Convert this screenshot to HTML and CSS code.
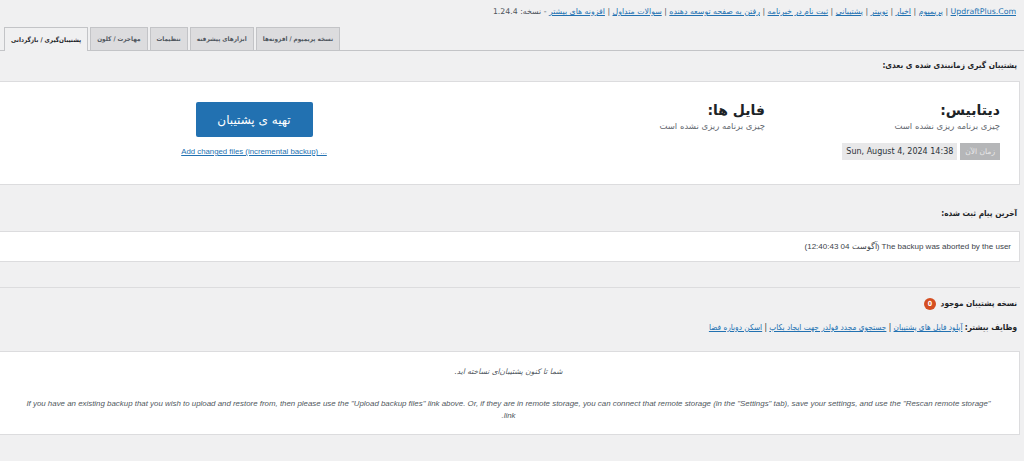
FILE: index.html
```html
<!DOCTYPE html>
<html lang="fa" dir="rtl">
<head>
<meta charset="utf-8">
<title>UpdraftPlus</title>
<link rel="stylesheet" href="styles.css">
</head>
<body>
<div class="topbar">
  <a href="#" class="en">UpdraftPlus.Com</a> | <a href="#">پریمیوم</a> | <a href="#">اخبار</a> | <a href="#">توییتر</a> | <a href="#">پشتیبانی</a> | <a href="#">ثبت نام در خبرنامه</a> | <a href="#">رفتن به صفحه توسعه دهنده</a> | <a href="#">سوالات متداول</a> | <a href="#">افزونه های بیشتر</a> - نسخه: 1.24.4
</div>
<nav class="tabs">
  <span class="tab active">پشتیبان‌گیری / بازگردانی</span>
  <span class="tab">مهاجرت / کلون</span>
  <span class="tab">تنظیمات</span>
  <span class="tab">ابزارهای پیشرفته</span>
  <span class="tab">نسخه پریمیوم / افزونه‌ها</span>
</nav>
<main class="wrap">
  <h2 class="heading first">پشتیبان گیری زمانبندی شده ی بعدی:</h2>
  <section class="box schedule">
    <div class="col col-db">
      <h3 class="col-title">دیتابیس:</h3>
      <p class="col-sub">چیزی برنامه ریزی نشده است</p>
      <div class="now">
        <span class="now-label">زمان الآن</span>
        <span class="now-date">Sun, August 4, 2024 14:38</span>
      </div>
    </div>
    <div class="col col-files">
      <h3 class="col-title">فایل ها:</h3>
      <p class="col-sub">چیزی برنامه ریزی نشده است</p>
    </div>
    <div class="col col-action">
      <button class="btn">تهیه ی پشتیبان</button>
      <a href="#" class="incr" dir="ltr">Add changed files (incremental backup) ...</a>
    </div>
  </section>

  <h2 class="heading second">آخرین پیام ثبت شده:</h2>
  <section class="box log">
    <span>The backup was aborted by the user (آگوست 04 12:40:43)</span>
  </section>

  <hr class="sep">

  <h2 class="heading third">نسخه پشتیبان موجود <span class="count">0</span></h2>
  <p class="tasks"><strong>وظایف بیشتر:</strong> <a href="#">آپلود فایل های پشتیبان</a> | <a href="#">جستجوی مجدد فولدر جهت ایجاد بکاپ</a> | <a href="#">اسکن دوباره فضا</a></p>
  <section class="box empty">
    <p class="empty-fa">شما تا کنون پشتیبان‌ای نساخته اید.</p>
    <p class="empty-en">If you have an existing backup that you wish to upload and restore from, then please use the "Upload backup files" link above. Or, if they are in remote storage, you can connect that remote storage (in the "Settings" tab), save your settings, and use the "Rescan remote storage" link.</p>
  </section>
</main>
</body>
</html>
```
FILE: styles.css
```css
html, body {
  margin: 0;
  padding: 0;
  background: #f0f0f1;
  color: #3c434a;
  font-family: "DejaVu Sans", "Liberation Sans", sans-serif;
  font-size: 9px;
  overflow: hidden;
}

a { color: #2271b1; text-decoration: underline; }

.topbar {
  height: 15px;
  padding: 6px 8px 0 0;
  font-size: 7.8px;
  line-height: 12px;
  color: #50575e;
  white-space: nowrap;
}

.tabs {
  direction: ltr;
  display: flex;
  gap: 2px;
  padding: 6px 0 0 4px;
  border-bottom: 1px solid #c3c4c7;
  height: 23px;
}
.tab {
  display: flex;
  align-items: center;
  height: 22px;
  padding: 0 6px;
  background: #dcdcde;
  border: 1px solid #c3c4c7;
  border-bottom: none;
  color: #50575e;
  font-family: "DejaVu Sans Condensed", "DejaVu Sans", sans-serif;
  font-stretch: condensed;
  font-size: 6.4px;
  font-weight: bold;
  direction: rtl;
}
.tab.active {
  background: #f0f0f1;
  color: #1d2327;
  height: 23px;
  margin-bottom: -1px;
}

.wrap {
  margin: 0 4px 0 -2px;
}

.heading {
  margin: 0;
  font-family: "DejaVu Sans Condensed", "DejaVu Sans", sans-serif;
  font-stretch: condensed;
  font-size: 8.2px;
  font-weight: bold;
  color: #1d2327;
  line-height: 14px;
  padding-right: 3px;
}
.heading.first { padding-top: 7px; height: 23px; box-sizing: content-box; }
.heading.second { margin-top: 21px; height: 25px; }
.heading.third { margin-top: 8px; height: 24px; }

.box {
  background: #fff;
  border: 1px solid #dcdcde;
  border-left: none;
}

.schedule {
  display: flex;
  height: 102px;
  padding-right: 19px;
}
.col-db { width: 235px; }
.col-files { width: 255px; }
.col-title {
  margin: 18px 0 0;
  font-size: 14px;
  line-height: 20px;
  font-weight: bold;
  color: #1d2327;
}
.col-sub {
  margin: -1px 0 0;
  font-size: 8.5px;
  line-height: 14px;
  color: #646970;
}
.now {
  display: flex;
  gap: 3px;
  margin-top: 10px;
  height: 17px;
}
.now-label {
  display: flex;
  align-items: center;
  padding: 0 5px;
  background: #b5b6b8;
  color: #e9e9ea;
  font-size: 7.5px;
}
.now-date {
  display: flex;
  align-items: center;
  padding: 0 4px;
  background: #e8e8e9;
  color: #2c3338;
  font-size: 8px;
  font-family: "DejaVu Sans", sans-serif;
}
.col-action {
  flex: 1;
  display: flex;
  flex-direction: column;
  align-items: center;
  padding-top: 20px;
}
.btn {
  width: 117px;
  height: 35px;
  border: none;
  border-radius: 2px;
  background: #2271b1;
  color: #fff;
  font-family: inherit;
  font-size: 12px;
  font-weight: normal;
}
.incr {
  margin-top: 10px;
  font-size: 7.8px;
  line-height: 10px;
  font-family: "Liberation Sans", sans-serif;
}

.log {
  height: 29px;
  display: flex;
  align-items: center;
  padding-right: 8px;
  font-size: 8px;
  color: #3c434a;
  font-family: "Liberation Sans Narrow", "Liberation Sans", sans-serif;
}

.sep {
  margin: 25px 0 0;
  border: none;
  border-top: 1px solid #dcdcde;
}

.count {
  display: inline-block;
  width: 12px;
  height: 12px;
  line-height: 12px;
  border-radius: 6px;
  background: #d54e21;
  color: #fff;
  font-size: 7px;
  text-align: center;
  vertical-align: middle;
  margin-right: 2px;
}

.tasks {
  margin: 0;
  height: 31px;
  line-height: 14px;
  padding-right: 3px;
  font-family: "DejaVu Sans Condensed", "DejaVu Sans", sans-serif;
  font-stretch: condensed;
  font-size: 8.2px;
  color: #1d2327;
}
.tasks strong { font-weight: bold; }

.empty {
  height: 82px;
  text-align: center;
  font-style: italic;
  color: #50575e;
  padding: 0 28px;
}
.empty-fa {
  margin: 14px 0 0;
  font-size: 7.5px;
  line-height: 12px;
}
.empty-en {
  margin: 20px 0 0;
  font-size: 7.9px;
  line-height: 12px;
  font-family: "Liberation Sans Narrow", "Liberation Sans", sans-serif;
}
```
